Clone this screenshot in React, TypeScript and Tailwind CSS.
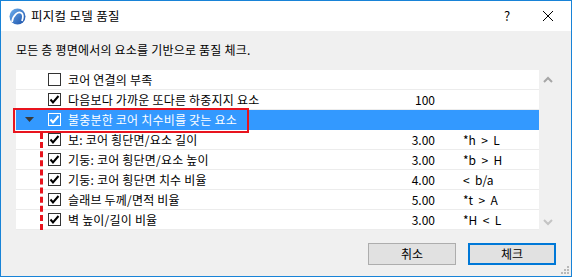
import React from 'react';

type Row = {
  label: string;
  checked: boolean;
  value?: string;
  formula?: string;
  child?: boolean;
  selected?: boolean;
};

const rows: Row[] = [
  { label: '코어 연결의 부족', checked: false },
  { label: '다음보다 가까운 또다른 하중지지 요소', checked: true, value: '100' },
  { label: '불충분한 코어 치수비를 갖는 요소', checked: true, selected: true },
  { label: '보: 코어 횡단면/요소 길이', checked: true, value: '3.00', formula: '*h > L', child: true },
  { label: '기둥: 코어 횡단면/요소 높이', checked: true, value: '3.00', formula: '*b > H', child: true },
  { label: '기둥: 코어 횡단면 치수 비율', checked: true, value: '4.00', formula: '< b/a', child: true },
  { label: '슬래브 두께/면적 비율', checked: true, value: '5.00', formula: '*t > A', child: true },
  { label: '벽 높이/길이 비율', checked: true, value: '3.00', formula: '*H < L', child: true },
];

const font = "font-['Noto_Sans_CJK_KR','Noto_Sans',sans-serif]";

const CheckBox = ({ checked, selected }: { checked: boolean; selected?: boolean }) => (
  <div
    className={`w-[13px] h-[13px] border flex items-center justify-center ${
      selected ? 'border-white bg-transparent' : 'border-[#333] bg-white'
    }`}
  >
    {checked && (
      <svg width="11" height="11" viewBox="0 0 11 11">
        <path
          d="M1.5 5.5 L4 8.5 L9.5 2"
          fill="none"
          stroke={selected ? '#fff' : '#000'}
          strokeWidth="2"
        />
      </svg>
    )}
  </div>
);

const Logo = () => (
  <svg width="17" height="17" viewBox="0 0 17 17">
    <defs>
      <linearGradient id="lg" x1="0" y1="0" x2="1" y2="1">
        <stop offset="0" stopColor="#6fb1ef" />
        <stop offset="1" stopColor="#1a4fa8" />
      </linearGradient>
    </defs>
    <circle cx="8.5" cy="8.5" r="8" fill="url(#lg)" />
    <path d="M3 14 C4 7 9 3 12.5 5 C14.5 6.5 14 10 13 13" fill="none" stroke="#fff" strokeWidth="1.8" />
  </svg>
);

export default function App() {
  return (
    <div className={`w-[572px] h-[277px] border border-[#1883d7] bg-[#f0f0f0] flex flex-col ${font} text-[12px] text-black`}>
      {/* Title bar */}
      <div className="h-[30px] bg-white flex items-center pl-[8px] shrink-0">
        <Logo />
        <span className="ml-[5px] text-[12.5px] tracking-[0.3px]">피지컬 모델 품질</span>
        <div className="ml-auto flex items-center">
          <span className="w-[20px] text-center text-[13px] mr-[25px]">?</span>
          <svg width="12" height="12" viewBox="0 0 12 12" className="mr-[17px]">
            <path d="M1 1 L11 11 M11 1 L1 11" stroke="#000" strokeWidth="1" />
          </svg>
        </div>
      </div>

      {/* Description */}
      <div className="h-[39px] pl-[15px] pt-[11px] leading-[16px] tracking-[0.2px]">모든 층 평면에서의 요소를 기반으로 품질 체크.</div>

      {/* List */}
      <div className="flex pl-[15px] h-[160px]">
        <div className="w-[523px] bg-white relative">
          {rows.map((r, i) => (
            <div
              key={i}
              className={`h-[20px] flex items-center border-b ${
                r.selected ? 'bg-[#3399ff] border-[#3399ff] text-white' : 'border-[#ececec]'
              }`}
            >
              <div className="w-[32px] pl-[9px] flex items-center">
                {r.selected && (
                  <svg width="9" height="6" viewBox="0 0 9 6">
                    <path d="M0 0 H9 L4.5 5 Z" fill="#3a3a3a" />
                  </svg>
                )}
              </div>
              <CheckBox checked={r.checked} selected={r.selected} />
              <span className="ml-[7px] w-[296px] whitespace-nowrap tracking-[0.2px]">{r.label}</span>
              <span className="w-[71px] text-right">{r.value}</span>
              <span className="ml-[28px] whitespace-pre">{r.formula?.replace(/ /g, '  ')}</span>
            </div>
          ))}
          {/* Highlight box around selected parent row */}
          <div className="absolute left-[-3px] top-[38px] w-[236px] h-[25px] border-2 border-[#e8141e] pointer-events-none" />
          {/* Red dashed guide */}
          <div className="absolute left-[24px] top-[63px] h-[97px] border-l-[3px] border-dashed border-[#e8141e] pointer-events-none" />
        </div>
        {/* Scrollbar */}
        <div className="w-[17px] flex flex-col items-center justify-between pt-[6px] pb-[4px]">
          <svg width="10" height="7" viewBox="0 0 10 7">
            <path d="M1 6 L5 2 L9 6" fill="none" stroke="#a6a6a6" strokeWidth="2" />
          </svg>
          <svg width="10" height="7" viewBox="0 0 10 7">
            <path d="M1 1 L5 5 L9 1" fill="none" stroke="#c4c4c4" strokeWidth="2" />
          </svg>
        </div>
      </div>

      {/* Buttons */}
      <div className="flex justify-end gap-[12px] pr-[15px] pt-[13px] relative flex-1">
        <button className="w-[88px] h-[22px] border border-[#adadad] bg-[#e1e1e1] text-[12px]">취소</button>
        <button className="w-[88px] h-[22px] border-2 border-[#0078d7] bg-[#e1e1e1] text-[12px]">체크</button>
        <svg width="10" height="10" viewBox="0 0 10 10" className="absolute right-[1px] bottom-[1px]">
          <g fill="#b8b8b8">
            <rect x="7" y="1" width="2" height="2" />
            <rect x="4" y="4" width="2" height="2" />
            <rect x="7" y="4" width="2" height="2" />
            <rect x="1" y="7" width="2" height="2" />
            <rect x="4" y="7" width="2" height="2" />
            <rect x="7" y="7" width="2" height="2" />
          </g>
        </svg>
      </div>
    </div>
  );
}
